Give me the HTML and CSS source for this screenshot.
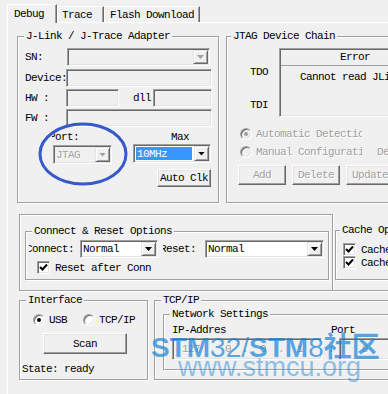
FILE: index.html
```html
<!DOCTYPE html>
<html lang="en">
<head>
    <meta charset="UTF-8">
    <title>J-Link Debug Settings</title>
    <link rel="stylesheet" href="styles.css">
</head>
<body>
<div class="window">
    <div class="tabs">
        <div class="tab tab-active">Debug</div>
        <div class="tab tab-trace">Trace</div>
        <div class="tab tab-flash">Flash Download</div>
    </div>

    <div class="panel">
        <!-- adapter + chain -->
        <div class="row">
            <div class="group jlink">
                <div class="legend">J-Link / J-Trace Adapter</div>
                <div class="line sn">
                    <span class="lbl">SN:</span>
                    <div class="combo off sn-box"><span class="combo-text"></span><span class="drop"></span></div>
                </div>
                <div class="line dev">
                    <span class="lbl">Device:</span>
                    <div class="edit dev-box"></div>
                </div>
                <div class="line hw">
                    <span class="lbl">HW :</span>
                    <div class="edit hw-box"></div>
                    <span class="dll-lbl">dll</span>
                    <div class="edit dll-box"></div>
                </div>
                <div class="line fw">
                    <span class="lbl">FW :</span>
                    <div class="edit dev-box"></div>
                </div>
                <div class="port-row">
                    <span class="clip port-lbl"><span>Port:</span></span>
                    <span>Max</span>
                </div>
                <div class="clk-row">
                    <div class="combo off port-box"><span class="combo-text dim">JTAG</span><span class="drop"></span></div>
                    <div class="combo mhz-box"><span class="combo-text sel">10MHz</span><span class="drop"></span></div>
                </div>
                <div class="btn auto">Auto Clk</div>
            </div>

            <div class="group chain">
                <div class="legend">JTAG Device Chain</div>
                <div class="chain-body">
                    <div class="pins">
                        <div class="pin-tdo">TDO</div>
                        <div class="pin-tdi">TDI</div>
                    </div>
                    <div class="list">
                        <div class="list-head">Error</div>
                        <div class="list-row">Cannot read JLink device chain</div>
                    </div>
                </div>
                <div class="opt opt-auto">
                    <span class="radio off on"></span>
                    <span class="opt-text dim">Automatic Detection</span>
                </div>
                <div class="opt opt-man">
                    <span class="radio off"></span>
                    <span class="opt-text dim">Manual Configuration</span>
                    <span class="de dim">Device Name</span>
                </div>
                <div class="chain-btns">
                    <div class="btn dim">Add</div>
                    <div class="btn dim">Delete</div>
                    <div class="btn dim">Update</div>
                </div>
            </div>
        </div>

        <!-- connect + cache -->
        <div class="row row-connect">
            <div class="group frame">
                <div class="group conn">
                    <div class="legend">Connect &amp; Reset Options</div>
                    <div class="conn-row">
                        <span class="clip conn-lbl"><span>Connect:</span></span>
                        <div class="combo c-box"><span class="combo-text">Normal</span><span class="drop"></span></div>
                        <span class="clip reset-lbl"><span>Reset:</span></span>
                        <div class="combo r-box"><span class="combo-text">Normal</span><span class="drop"></span></div>
                    </div>
                    <div class="chk-row conn-chk">
                        <span class="check"><svg width="9" height="9" viewBox="0 0 9 9"><path d="M1 4 L3.5 6.5 L8 1.5" fill="none" stroke="#000" stroke-width="2"/></svg></span>
                        <span class="chk-text">Reset after Connect</span>
                    </div>
                </div>
            </div>
            <div class="cache-wrap">
                <div class="group cache">
                    <div class="legend">Cache Options</div>
                    <div class="chk-row cache-first">
                        <span class="check"><svg width="9" height="9" viewBox="0 0 9 9"><path d="M1 4 L3.5 6.5 L8 1.5" fill="none" stroke="#000" stroke-width="2"/></svg></span>
                        <span class="chk-text">Cache Code</span>
                    </div>
                    <div class="chk-row">
                        <span class="check"><svg width="9" height="9" viewBox="0 0 9 9"><path d="M1 4 L3.5 6.5 L8 1.5" fill="none" stroke="#000" stroke-width="2"/></svg></span>
                        <span class="chk-text">Cache Memory</span>
                    </div>
                </div>
            </div>
        </div>

        <!-- interface + tcp/ip -->
        <div class="row row-iface">
            <div class="group iface">
                <div class="legend">Interface</div>
                <div class="iface-opts">
                    <span class="radio on"></span>
                    <span class="iface-text">USB</span>
                    <span class="radio tcp-radio"></span>
                    <span class="iface-text">TCP/IP</span>
                </div>
                <div class="btn scan">Scan</div>
                <div class="state">State: ready</div>
            </div>
            <div class="group tcp">
                <div class="legend">TCP/IP</div>
                <div class="group net">
                    <div class="legend">Network Settings</div>
                    <div class="net-labels">
                        <span class="ip-lbl">IP-Addres</span>
                        <span>Port</span>
                    </div>
                    <div class="net-fields">
                        <div class="edit ip-box dim">
                            <span class="oct1">127</span><span class="gap9">.</span><span class="gap10">0</span><span class="gap11">.</span><span class="gap12">0</span><span class="gap12">.</span><span class="gap13">1</span>
                        </div>
                        <span class="colon dim">:</span>
                        <div class="edit port-field dim">0</div>
                    </div>
                </div>
            </div>
        </div>
    </div>

    <!-- annotation drawn over the dialog -->
    <svg class="mark" width="92" height="66" viewBox="0 0 92 66">
        <ellipse cx="46" cy="33" rx="43" ry="30" fill="none" stroke="#3759c9" stroke-width="3"/>
    </svg>

    <div class="wm">
        <div class="wm-1"><b>STM</b><span class="thin">32/</span><b>STM</b><span class="thin">8</span><b>社区</b></div>
        <div class="wm-2">www.stmcu.org</div>
    </div>
</div>
</body>
</html>
```

FILE: styles.css
```css
/* Base: classic dialog look */
* { box-sizing: border-box; margin: 0; padding: 0; }
body { background: #f0f0f0; color: #000; font: 11px/12px "Liberation Mono", "Courier New", monospace; letter-spacing: -0.6px; overflow: hidden; }
.window { position: relative; width: 388px; height: 394px; overflow: hidden; }
.dim { color: #a0a0a0; text-shadow: 1px 1px 0 #fff; }

/* Tabs */
.tabs { position: relative; z-index: 1; display: flex; align-items: flex-end; height: 22px; padding-left: 7px; }
.tab { height: 16px; padding: 2px 0 0 4px; background: #f0f0f0; border: 1px solid; border-color: #fff #696969 #fff #fff; border-bottom: 0; box-shadow: inset -1px 0 #a0a0a0; white-space: nowrap; }
.tab-active { width: 50px; height: 19px; margin-bottom: -1px; padding: 3px 0 0 6px; }
.tab-trace { width: 47px; }
.tab-flash { width: 96px; padding-left: 5px; }

.panel { width: 600px; height: 372px; margin-left: 7px; border-top: 1px solid #fff; border-left: 1px solid #fff; padding: 13px 0 0 9px; }
.row { display: flex; align-items: flex-start; }
.row-connect { margin-top: 11px; }
.row-iface { margin-top: 9px; }

/* Etched group box */
.group { flex: none; border: 1px solid #a0a0a0; box-shadow: inset 1px 1px #fff, 1px 1px #fff; }
.legend { width: fit-content; height: 12px; margin: -7px 0 0 6px; padding: 0 2px; background: #f0f0f0; white-space: nowrap; }

/* Controls */
.edit, .combo, .list, .check { border: 1px solid; border-color: #a0a0a0 #fff #fff #a0a0a0; box-shadow: inset 1px 1px #696969, inset -1px -1px #e3e3e3; }
.edit { height: 18px; background: #f0f0f0; flex: none; }
.combo { display: flex; height: 18px; padding: 1px; background: #fff; flex: none; }
.combo.off { background: #f0f0f0; }
.combo-text { flex: 1; display: flex; align-items: center; padding-left: 1px; white-space: nowrap; }
.drop { width: 15px; flex: none; display: flex; align-items: center; justify-content: center; background: #f0f0f0; border: 1px solid; border-color: #e3e3e3 #696969 #696969 #e3e3e3; box-shadow: inset 1px 1px #fff, inset -1px -1px #a0a0a0; color: #000; }
.drop::after { content: ""; width: 7px; height: 4px; background: currentColor; clip-path: polygon(0 0, 100% 0, 50% 100%); }
.combo.off .drop { color: #a0a0a0; }
.sel { margin: 1px 2px 1px 1px; background: #3399ff; color: #fff; }

.btn { display: flex; align-items: center; justify-content: center; flex: none; background: #f0f0f0; border: 1px solid; border-color: #fff #696969 #696969 #fff; box-shadow: inset -1px -1px #a0a0a0, inset 1px 1px #e3e3e3; white-space: nowrap; }

.check { width: 13px; height: 13px; flex: none; display: flex; align-items: center; justify-content: center; background: #fff; }
.radio { position: relative; width: 12px; height: 12px; flex: none; border-radius: 50%; border: 1px solid; border-color: #a0a0a0 #fff #fff #a0a0a0; box-shadow: inset 1px 1px #696969, inset -1px -1px #e3e3e3; background: #fff; }
.radio.off { background: #f0f0f0; }
.radio.on::after { content: ""; position: absolute; left: 3px; top: 3px; width: 4px; height: 4px; border-radius: 50%; background: #000; }
.radio.off.on::after { background: #a0a0a0; }

/* J-Link adapter box */
.jlink { width: 202px; height: 167px; }
.line { display: flex; align-items: center; height: 18px; padding-left: 7px; }
.sn { margin-top: 6px; }
.dev { margin-top: 3px; }
.hw, .fw { margin-top: 2px; }
.lbl { width: 41px; flex: none; }
.sn-box { margin-left: 1px; width: 143px; }
.dev-box { width: 146px; }
.hw-box { width: 53px; }
.dll-lbl { margin-left: 14px; }
.dll-box { margin-left: 2px; width: 59px; }
.port-row { display: flex; height: 12px; margin-top: 4px; padding-left: 34px; }
.port-lbl { width: 119px; }
.port-lbl span { margin-left: -6px; }
.clk-row { display: flex; align-items: flex-start; margin-top: 1px; padding-left: 35px; }
.port-box { margin-top: 1px; width: 59px; height: 19px; }
.mhz-box { margin-left: 21px; width: 78px; height: 19px; }
.auto { width: 54px; height: 18px; margin: 5px 7px 0 auto; }

/* JTAG chain box */
.chain { width: 300px; height: 167px; margin-left: 7px; }
.chain .legend { margin-left: 4px; }
.chain-body { display: flex; margin-top: 6px; }
.pins { width: 52px; flex: none; padding-left: 23px; }
.pin-tdo { margin-top: 18px; }
.pin-tdi { margin-top: 21px; }
.list { width: 200px; height: 69px; padding: 1px; background: #f0f0f0; }
.list-head { height: 16px; line-height: 15px; padding-left: 59px; border-bottom: 1px solid #a0a0a0; }
.list-row { margin-top: 5px; padding-left: 19px; white-space: nowrap; }
.opt { display: flex; align-items: center; height: 13px; padding-left: 13px; white-space: nowrap; }
.opt-auto { margin-top: 10px; }
.opt-man { margin-top: 5px; }
.opt-text { width: 106px; margin-left: 4px; overflow: hidden; flex: none; }
.de { margin-left: 15px; }
.chain-btns { display: flex; gap: 6px; margin-top: 7px; padding-left: 11px; }
.chain-btns .btn { width: 48px; height: 20px; }

/* Connect & reset */
.frame { width: 314px; height: 77px; margin-left: 2px; }
.conn { width: 304px; height: 49px; margin: 16px 0 0 5px; }
.conn-row { display: flex; align-items: center; height: 18px; margin-top: 3px; }
.clip { flex: none; overflow: hidden; white-space: nowrap; }
.clip span { margin-left: -3px; }
.conn-lbl { width: 48px; margin-left: 3px; }
.c-box { width: 78px; margin-left: 3px; }
.reset-lbl { width: 33px; margin-left: 5px; }
.r-box { width: 119px; margin-left: 9px; }
.chk-row { display: flex; align-items: center; height: 13px; white-space: nowrap; }
.conn-chk { margin-top: 3px; padding-left: 11px; }
.chk-text { margin-left: 5px; width: 96px; overflow: hidden; flex: none; }

.cache-wrap { width: 300px; height: 77px; flex: none; border-bottom: 1px solid #a0a0a0; box-shadow: 0 1px #fff; }
.cache { width: 200px; height: 50px; margin: 16px 0 0 2px; }
.cache .legend { margin-left: 4px; }
.cache .chk-row { padding-left: 7px; }
.cache-first { margin-top: 7px; }

/* Interface / TCP */
.iface { width: 129px; height: 80px; margin-left: 2px; }
.iface-opts { display: flex; align-items: center; height: 13px; margin-top: 7px; padding-left: 13px; }
.iface-text { margin-left: 4px; }
.tcp-radio { margin-left: 16px; }
.scan { width: 84px; height: 21px; margin: 7px 0 0 23px; }
.state { margin-top: 9px; padding-left: 2px; white-space: nowrap; }

.tcp { width: 300px; height: 80px; margin-left: 6px; }
.net { width: 290px; height: 56px; margin: 8px 0 0 8px; }
.net-labels { display: flex; height: 12px; margin-top: 4px; padding-left: 8px; }
.ip-lbl { width: 159px; }
.net-fields { display: flex; align-items: center; margin-top: 2px; padding-left: 8px; }
.ip-box { display: flex; align-items: center; width: 150px; height: 22px; }
.oct1 { margin-left: 9px; }
.gap9 { margin-left: 9px; }
.gap10 { margin-left: 10px; }
.gap11 { margin-left: 11px; }
.gap12 { margin-left: 12px; }
.gap13 { margin-left: 13px; }
.colon { margin-left: 6px; }
.port-field { width: 80px; height: 22px; margin-left: 5px; padding-left: 22px; line-height: 20px; }

/* Overlays */
.mark { position: absolute; left: 37px; top: 121px; }
.wm { position: absolute; left: 151px; top: 334px; font-family: "Liberation Sans", "Noto Sans CJK SC", sans-serif; letter-spacing: 0; white-space: nowrap; pointer-events: none; }
.wm-1 { font-size: 28px; line-height: 28px; color: rgba(20, 130, 215, 0.7); }
.wm-1 .thin { font-weight: normal; }
.wm-2 { margin: -8px 0 0 27px; font-size: 27px; line-height: 27px; color: rgba(40, 140, 220, 0.5); }
```
